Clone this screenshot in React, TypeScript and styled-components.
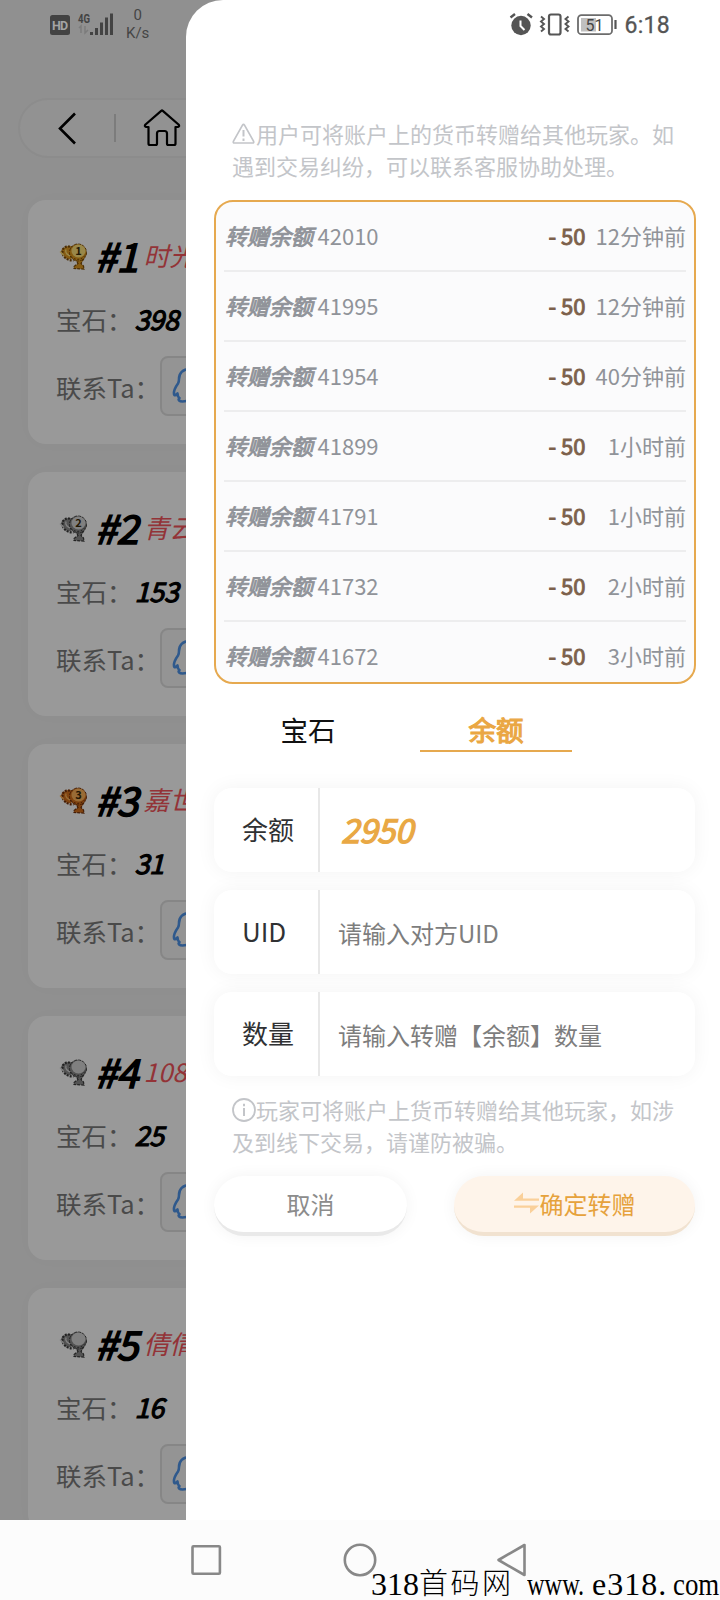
import React from "react";
import styled, { createGlobalStyle } from "styled-components";

const GlobalStyle = createGlobalStyle`
  * { box-sizing: border-box; }
  body { margin: 0; background: #fcfcfc; }
  body, input, button { font-family: "Noto Sans CJK SC", sans-serif; }
`;

const Phone = styled.div`
  position: relative;
  width: 720px;
  height: 1600px;
  overflow: hidden;
  display: flex;
  flex-direction: column;
`;

const Screen = styled.div`
  position: relative;
  height: 1520px;
  overflow: hidden;
  background: #f1f1f1;
`;

const RankPage = styled.div`
  display: flex;
  flex-direction: column;
  padding: 98px 0 0 18px;
`;

const NavPill = styled.div`
  display: flex;
  align-items: center;
  width: 240px;
  height: 60px;
  padding-left: 36px;
  border: 2px solid #e9e9e9;
  border-radius: 30px;
  background: #f3f3f3;
`;

const PillDivider = styled.div`
  width: 2px;
  height: 28px;
  margin: 0 27px 0 36px;
  background: #cfcfcf;
`;

const RankList = styled.div`
  display: flex;
  flex-direction: column;
  gap: 28px;
  padding: 42px 0 0 10px;
`;

const RankCard = styled.div`
  height: 244px;
  width: 664px;
  flex: none;
  padding: 30px 28px 0;
  border-radius: 18px;
  background: #fff;
  box-shadow: 0 0 20px rgba(0, 0, 0, 0.03);
`;

const RankTitle = styled.div`
  display: flex;
  align-items: center;
  height: 50px;
  white-space: nowrap;
`;

const RankNumber = styled.span`
  margin-left: 5px;
  font-size: 39.5px;
  line-height: 49px;
  padding-bottom: 1px;
  letter-spacing: -0.7px;
  font-style: italic;
  color: #000;
  -webkit-text-stroke: 1.6px #000;
`;

const PlayerName = styled.span`
  margin-left: 6px;
  font-size: 26px;
  font-style: italic;
  line-height: 46px;
  color: #f5565c;
`;

const RankRow = styled.div<{ $height: number }>`
  display: flex;
  align-items: center;
  height: ${(p) => p.$height}px;
  font-size: 25.5px;
  color: #7c7c7c;
  white-space: nowrap;
`;

const GemCount = styled.span`
  margin-left: 2px;
  font-size: 27px;
  letter-spacing: -0.4px;
  font-style: italic;
  color: #000;
  -webkit-text-stroke: 1.1px #000;
`;

const ContactButton = styled.div`
  display: flex;
  align-items: center;
  width: 80px;
  height: 60px;
  padding-left: 10px;
  border: 2px solid #e0e0e0;
  border-radius: 8px;
  background: #f7f7f7;
`;

const Shade = styled.div`
  position: absolute;
  inset: 0;
  background: rgba(0, 0, 0, 0.4);
`;

const Drawer = styled.div`
  position: absolute;
  top: 0;
  right: 0;
  bottom: 0;
  width: 534px;
  padding: 118px 24px 0 28px;
  display: flex;
  flex-direction: column;
  background: #fff;
  border-top-left-radius: 37px;
`;

const Hint = styled.p<{ $top?: number }>`
  margin: ${(p) => p.$top ?? 0}px 0 0;
  padding-left: 18px;
  height: 64px;
  font-size: 22px;
  line-height: 32px;
  color: #c3c5c9;
  white-space: nowrap;
`;

const HintLine = styled.span`
  display: flex;
  align-items: center;
  height: 32px;
  padding-bottom: 2px;

  svg { margin-top: 2px; }
`;

const RecordList = styled.div`
  height: 484px;
  margin-top: 18px;
  padding: 0 8px;
  overflow: hidden;
  border: 2px solid #e6a94f;
  border-radius: 19px;
  background: #fbfbfc;
`;

const Record = styled.div`
  display: flex;
  align-items: center;
  height: 70px;
  padding-bottom: 2px;
  font-size: 22px;
  color: #909399;
  border-bottom: 2px solid #ededee;
  white-space: nowrap;
`;

const RecordKind = styled.span`
  width: 93.5px;
  padding-left: 1px;
  font-style: italic;
  -webkit-text-stroke: 0.9px #909399;
`;

const Amount = styled.span`
  margin-left: auto;
  color: #7c604b;
  -webkit-text-stroke: 0.9px #7c604b;
`;

const Ago = styled.span`
  width: 100.5px;
  text-align: right;
`;

const Tabs = styled.div`
  display: flex;
  gap: 36px;
  padding: 20px 0 0 18px;
`;

const Tab = styled.div<{ $active?: boolean }>`
  width: 152px;
  height: 48px;
  text-align: center;
  font-size: 27.5px;
  line-height: 50px;
  color: ${(p) => (p.$active ? "#eaa743" : "#111")};
  -webkit-text-stroke: ${(p) => (p.$active ? "1.2px #eaa743" : "0")};
  border-bottom: 2px solid ${(p) => (p.$active ? "#e6a94f" : "transparent")};
`;

const Fields = styled.div`
  display: flex;
  flex-direction: column;
  gap: 18px;
  margin-top: 36px;
`;

const Field = styled.label`
  display: flex;
  height: 84px;
  width: 481px;
  border-radius: 18px;
  background: #fff;
  box-shadow: 0 0 20px rgba(0, 0, 0, 0.05);
`;

const FieldLabel = styled.span`
  width: 106px;
  padding-left: 28px;
  border-right: 2px solid #e8e8e8;
  font-size: 26px;
  line-height: 82px;
  color: #303133;
`;

const FieldInput = styled.input`
  flex: 1;
  min-width: 0;
  padding: 1px 18px 0;
  border: 0;
  outline: 0;
  background: transparent;
  font-size: 24px;
  &::placeholder { color: #7d7d7d; }
`;

const Balance = styled.span`
  padding-left: 21px;
  font-size: 33px;
  letter-spacing: -0.4px;
  line-height: 82px;
  font-style: italic;
  color: #e9a844;
  -webkit-text-stroke: 1.3px #e9a844;
`;

const Actions = styled.div`
  display: flex;
  justify-content: space-between;
  width: 481px;
  margin-top: 18px;
`;

const PillButton = styled.button<{ $primary?: boolean }>`
  display: flex;
  align-items: center;
  justify-content: center;
  width: ${(p) => (p.$primary ? 241 : 193)}px;
  height: 60px;
  padding: 0 0 2px;
  border: 0;
  border-bottom: 4px solid ${(p) => (p.$primary ? "#f1e2d0" : "#e9e9e9")};
  border-radius: 30px;
  background: ${(p) => (p.$primary ? "#fef4ea" : "#fff")};
  box-shadow: 0 0 16px rgba(0, 0, 0, 0.05);
  font-size: 24px;
  color: ${(p) => (p.$primary ? "#e6a23c" : "#8c8c8c")};
`;

const StatusBar = styled.div`
  position: absolute;
  top: 0;
  left: 0;
  width: 720px;
  height: 48px;
  padding: 0 50px;
  display: flex;
  justify-content: space-between;
  font-family: Roboto, sans-serif;
`;

const StatusGroup = styled.div`
  display: flex;
  align-items: center;
  color: #555;
`;

const NetSpeed = styled.div`
  margin-left: 10px;
  text-align: center;
  font-size: 15px;
  line-height: 18px;
  color: #454545;
`;

const Clock = styled.span`
  margin-left: 7px;
  padding-top: 3px;
  font-size: 23px;
  letter-spacing: 0.3px;
  line-height: 47px;
  color: #555;
  -webkit-text-stroke: 0.3px #555;
`;

const SystemNav = styled.div`
  display: flex;
  justify-content: center;
  gap: 117px;
  height: 80px;
  padding-top: 22px;
  background: #fcfcfc;
`;

const Watermark = styled.div`
  position: absolute;
  left: 371px;
  bottom: 0;
  display: flex;
  height: 36px;
  line-height: 41px;
  font-family: "Liberation Serif", "Noto Sans CJK SC", serif;
  font-size: 32px;
  color: #000;
  white-space: pre;
`;

const MarkRun = styled.span<{ $width: number; $scale?: number; $spacing?: number }>`
  width: ${(p) => p.$width}px;
  letter-spacing: ${(p) => p.$spacing ?? 0}px;
  transform: scaleX(${(p) => p.$scale ?? 1});
  transform-origin: left;
`;

const MarkName = styled.span`
  width: 108px;
  font-size: 29px;
  letter-spacing: 2.5px;
  font-weight: 300;
`;

const metals: Record<string, [string, string, string]> = {
  gold: ["#ffe27a", "#e09a20", "#7a4a08"],
  silver: ["#d6d6d6", "#8a8a8a", "#3a3a3a"],
  bronze: ["#ffb45a", "#d5701c", "#70300a"],
};

const Trophy = ({ metal, mark }: { metal: string; mark?: string }) => {
  const [light, mid, dark] = metals[metal];
  return (
    <svg width="34" height="34" viewBox="-1 -0.500 34 34" fill="none">
      <path d="M5 10l7-3 5 2-3 12-5-1-5-5z" fill={mid} />
      <path d="M16 9.500C10 6 5 9 5.500 14c.5 5 5 8 11 8" stroke={dark} strokeWidth="2.200" strokeDasharray="2 1.200" />
      <path d="M9 11c-1 3 1 6 6 7M3 13l4 4" stroke={light} strokeWidth="1.300" />
      <path d="M18 20l3 5-4 3v2l10 .5-.5-3-2.500-2.500 3-5z" fill={mid} stroke={dark} strokeWidth="1.200" strokeDasharray="3 1" />
      <ellipse cx="21" cy="14" rx="8.500" ry="8.500" fill={mid} stroke={dark} strokeWidth="1" strokeDasharray="3 1" />
      <ellipse cx="21.500" cy="12.500" rx="7" ry="6.500" fill={light} />
      <path d="M14 18c4 4 10 4 14-1" stroke={dark} strokeWidth="1" strokeDasharray="2 1.500" />
      {mark && (
        <text x="21.500" y="16.500" textAnchor="middle" fontSize="11" fontWeight="700" fill="#3a2a08" fontFamily="Noto Sans CJK SC">
          {mark}
        </text>
      )}
    </svg>
  );
};

const QQIcon = () => (
  <svg width="38" height="38" viewBox="0 0 38 38" fill="none" stroke="#4f94ea" strokeWidth="2.600" strokeLinejoin="round" strokeLinecap="round">
    <path d="M18 2C10.500 2 7 6.500 7 12c0 2 0 3-1 4.500C3.500 20 1.500 23.500 2 27c.4 2 1.500 1.500 3.500-.5 0 2 .5 3.500 2 4.500-2 2 0 3.500 3 3.500s5-.5 7.500-2c2.500 1.500 4.500 2 7.500 2s5-1.500 3-3.500c1.500-1 2-2.500 2-4.500 2 2 3.100 2.500 3.500.5.5-3.500-1.500-7-4-10.500-1-1.500-1-2.500-1-4.500C29 6.500 25.500 2 18 2z" />
  </svg>
);

const ranks = [
  { name: "时光", gems: 398, metal: "gold", mark: "1" },
  { name: "青云", gems: 153, metal: "silver", mark: "2" },
  { name: "嘉世", gems: 31, metal: "bronze", mark: "3" },
  { name: "1088", gems: 25, metal: "silver" },
  { name: "倩倩", gems: 16, metal: "silver" },
];

const records = [
  ["42010", "12分钟前"],
  ["41995", "12分钟前"],
  ["41954", "40分钟前"],
  ["41899", "1小时前"],
  ["41791", "1小时前"],
  ["41732", "2小时前"],
  ["41672", "3小时前"],
];

export default function App() {
  return (
    <Phone>
      <GlobalStyle />
      <Screen>
        <RankPage>
          <NavPill>
            <svg width="22" height="34" viewBox="0 0 22 34" fill="none" stroke="#000" strokeWidth="2.600">
              <path d="M19 2.500L4 17.500l15 15" />
            </svg>
            <PillDivider />
            <svg width="38" height="38" viewBox="0 0 38 38" fill="none" stroke="#000" strokeWidth="2.200" strokeLinejoin="round">
              <path d="M18.200 1.800q.8-.6 1.600 0L35.500 15.500q1.500 2-.5 2.500H32.500V34.500q0 1.500-1.500 1.500H25.500q-1.500 0-1.500-1.500V24.500q0-2.500-2.500-2.500h-5q-2.500 0-2.500 2.500V34.500q0 1.500-1.500 1.500H7q-1.500 0-1.500-1.500V18H3q-2-.5-.5-2.500z" />
            </svg>
          </NavPill>
          <RankList>
            {ranks.map((r, i) => (
              <RankCard key={r.name}>
                <RankTitle>
                  <Trophy metal={r.metal} mark={r.mark} />
                  <RankNumber>#{i + 1}</RankNumber>
                  <PlayerName>{r.name}</PlayerName>
                </RankTitle>
                <RankRow $height={76}>
                  宝石：<GemCount>{r.gems}</GemCount>
                </RankRow>
                <RankRow $height={60}>
                  联系Ta：
                  <ContactButton>
                    <QQIcon />
                  </ContactButton>
                </RankRow>
              </RankCard>
            ))}
          </RankList>
        </RankPage>
        <Shade />
        <Drawer>
          <Hint>
            <HintLine>
              <svg width="24" height="24" viewBox="0 0 24 24" fill="none" stroke="#c3c5c9" strokeWidth="1.700" strokeLinejoin="round">
                <path d="M10.500 3.200q1-1.600 2 0l9 16q.8 1.800-1 1.800H2.500q-1.800 0-1-1.800z" />
                <path d="M11.500 8v6.500M11.500 16.500v2.500" strokeWidth="2" />
              </svg>
              用户可将账户上的货币转赠给其他玩家。如
            </HintLine>
            <HintLine>遇到交易纠纷，可以联系客服协助处理。</HintLine>
          </Hint>
          <RecordList>
            {records.map(([uid, ago]) => (
              <Record key={uid}>
                <RecordKind>转赠余额</RecordKind>
                <span>{uid}</span>
                <Amount>- 50</Amount>
                <Ago>{ago}</Ago>
              </Record>
            ))}
          </RecordList>
          <Tabs>
            <Tab>宝石</Tab>
            <Tab $active>余额</Tab>
          </Tabs>
          <Fields>
            <Field>
              <FieldLabel>余额</FieldLabel>
              <Balance>2950</Balance>
            </Field>
            <Field>
              <FieldLabel>UID</FieldLabel>
              <FieldInput placeholder="请输入对方UID" />
            </Field>
            <Field>
              <FieldLabel>数量</FieldLabel>
              <FieldInput placeholder="请输入转赠【余额】数量" />
            </Field>
          </Fields>
          <Hint $top={18}>
            <HintLine>
              <svg width="24" height="24" viewBox="0 0 24 24" fill="none" stroke="#c3c5c9" strokeWidth="1.800">
                <circle cx="12" cy="12" r="11" />
                <path d="M12 10v8M12 5.800v2.400" strokeWidth="2" />
              </svg>
              玩家可将账户上货币转赠给其他玩家，如涉
            </HintLine>
            <HintLine>及到线下交易，请谨防被骗。</HintLine>
          </Hint>
          <Actions>
            <PillButton>取消</PillButton>
            <PillButton $primary>
              <svg width="26" height="24" viewBox="0 0 26 24" fill="#fad09a">
                <path d="M0 9.800L9 1.500V7.400h16v2.400zM25 14.400L16 22.500v-5.700H0v-2.400z" />
              </svg>
              确定转赠
            </PillButton>
          </Actions>
        </Drawer>
        <StatusBar>
          <StatusGroup>
            <svg width="66" height="24" viewBox="0 0 66 24">
              <rect x="0" y="3" width="20" height="20" rx="2.500" fill="#434343" />
              <text x="10" y="17.500" textAnchor="middle" fontSize="12.500" fontWeight="700" fill="#a4a4a4" textLength="16">HD</text>
              <text x="28" y="11" fontSize="12" fontWeight="700" fill="#434343" textLength="12" lengthAdjust="spacingAndGlyphs">4G</text>
              <path d="M29 16l2-2v7M35 14v7l3-3" fill="none" stroke="#7c7c7c" strokeWidth="1.500" />
              <path d="M41.500 23v-3M46.500 23v-7M51.500 23V10.500M56.500 23V5.500M61.500 23V1.500" stroke="#434343" strokeWidth="3" />
            </svg>
            <NetSpeed>
              0<br />K/s
            </NetSpeed>
          </StatusGroup>
          <StatusGroup>
            <svg width="108" height="24" viewBox="0 0 108 24" fill="none" stroke="#555">
              <circle cx="12" cy="13.500" r="9.700" fill="#555" stroke="none" />
              <path d="M1.500 5.500L6 2M18.500 2L23 5.500" strokeWidth="2.400" />
              <path d="M11.500 8.500v5.500l4 4" stroke="#fff" strokeWidth="2" />
              <rect x="40" y="2.500" width="11.500" height="20" rx="2" strokeWidth="2.200" />
              <path d="M32 4.500l3 2.500-3 2.500 3 2.500-3 2.500 3 2.500-3 2.500M59.500 4.500l-3 2.500 3 2.500-3 2.500 3 2.500-3 2.500 3 2.500" strokeWidth="1.900" />
              <rect x="69" y="3.200" width="34" height="19" rx="3.500" strokeWidth="1.800" stroke="#6c6c6c" />
              <rect x="72" y="6" width="15" height="13.500" fill="#c0c0c0" stroke="none" />
              <path d="M106.500 8v9" strokeWidth="2.200" />
              <text x="85.500" y="18.500" textAnchor="middle" fontSize="16" fill="#444" stroke="none">51</text>
            </svg>
            <Clock>6:18</Clock>
          </StatusGroup>
        </StatusBar>
      </Screen>
      <SystemNav>
        <svg width="36" height="36" viewBox="0 0 36 36" fill="none" stroke="#888" strokeWidth="2.600">
          <rect x="3.500" y="4.300" width="27.400" height="27.400" rx="1" />
        </svg>
        <svg width="36" height="36" viewBox="0 0 36 36" fill="none" stroke="#888" strokeWidth="2.600">
          <circle cx="18" cy="18" r="15.200" />
        </svg>
        <svg width="36" height="36" viewBox="0 0 36 36" fill="none" stroke="#888" strokeWidth="2.600" strokeLinejoin="round">
          <path d="M29.500 3v30L3.500 18z" />
        </svg>
      </SystemNav>
      <Watermark>
        <MarkRun $width={48}>318</MarkRun>
        <MarkName>首码网</MarkName>
        <MarkRun $width={65} $scale={0.76}>www.</MarkRun>
        <MarkRun $width={81} $spacing={1}>e318.</MarkRun>
        <MarkRun $width={46} $scale={0.84}>com</MarkRun>
      </Watermark>
    </Phone>
  );
}
